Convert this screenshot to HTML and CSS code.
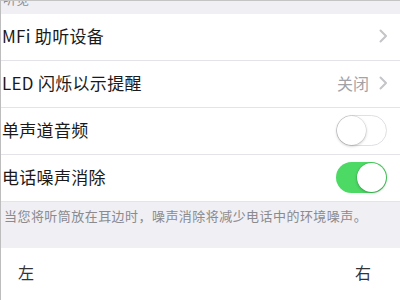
FILE: index.html
```html
<!DOCTYPE html>
<html lang="zh">
<head>
<meta charset="utf-8">
<link rel="stylesheet" href="styles.css">
</head>
<body>
<div class="page">
  <div class="header"><span class="header-text">听觉</span></div>
  <div class="group">
    <div class="row">
      <span class="label">MFi 助听设备</span>
      <span class="right">
        <svg class="chev" width="9" height="14" viewBox="0 0 9 14"><path d="M1.5 1.5 L7 7 L1.5 12.5" fill="none" stroke="#c4c4c9" stroke-width="2" stroke-linecap="round" stroke-linejoin="round"/></svg>
      </span>
    </div>
    <div class="row">
      <span class="label">LED 闪烁以示提醒</span>
      <span class="right">
        <span class="value">关闭</span>
        <svg class="chev" width="9" height="14" viewBox="0 0 9 14"><path d="M1.5 1.5 L7 7 L1.5 12.5" fill="none" stroke="#c4c4c9" stroke-width="2" stroke-linecap="round" stroke-linejoin="round"/></svg>
      </span>
    </div>
    <div class="row">
      <span class="label">单声道音频</span>
      <span class="toggle off"><span class="knob"></span></span>
    </div>
    <div class="row last">
      <span class="label">电话噪声消除</span>
      <span class="toggle on"><span class="knob"></span></span>
    </div>
  </div>
  <div class="footer">当您将听筒放在耳边时，噪声消除将减少电话中的环境噪声。</div>
  <div class="group balance">
    <span class="lr">左</span>
    <span class="lr">右</span>
  </div>
</div>
</body>
</html>
```

FILE: styles.css
```css
html, body {
  margin: 0;
  padding: 0;
  background: #ffffff;
}
body {
  width: 400px;
  height: 300px;
  overflow: hidden;
  font-family: "Noto Sans CJK SC", "Noto Sans", sans-serif;
}
.page {
  width: 399px;
  height: 299px;
  border-left: 1px solid #bdbdbd;
  border-top: 1px solid #c4c4c4;
  background: #efeff4;
  overflow: hidden;
}
.header {
  height: 13px;
  overflow: hidden;
  padding-left: 2px;
}
.header-text {
  display: block;
  font-size: 13px;
  line-height: 16px;
  margin-top: -10px;
  color: #8e8e93;
}
.group {
  background: #ffffff;
}
.row {
  height: 46px;
  display: flex;
  align-items: center;
  justify-content: space-between;
  border-bottom: 1px solid #e4e4e8;
  padding: 0 12px 0 1px;
}
.row.last {
  border-bottom: none;
}
.label {
  font-size: 17px;
  line-height: 24px;
  margin-top: -3px;
  color: #1a1a1a;
  letter-spacing: 0.3px;
}
.right {
  display: flex;
  align-items: center;
  gap: 10px;
  margin-top: -3px;
}
.value {
  font-size: 16px;
  color: #a2a2a7;
}
.chev {
  display: block;
}
.toggle {
  width: 51px;
  height: 31px;
  border-radius: 16px;
  box-sizing: border-box;
  position: relative;
  margin-right: 1px;
}
.toggle.off {
  background: #ffffff;
  border: 1.5px solid #e0e0e4;
  margin-top: -2px;
}
.toggle.on {
  background: #4cd964;
  margin-top: -2px;
}
.knob {
  position: absolute;
  top: 1px;
  width: 29px;
  height: 29px;
  border-radius: 50%;
  background: #ffffff;
  box-shadow: 0 1px 3px rgba(0,0,0,0.25), 0 0 0 0.5px rgba(0,0,0,0.12);
}
.toggle.off .knob {
  left: 0;
  top: 0;
}
.toggle.on .knob {
  right: 1px;
}
.footer {
  height: 47px;
  box-sizing: border-box;
  padding: 5px 0 0 3px;
  font-size: 13px;
  line-height: 18px;
  letter-spacing: 0.45px;
  color: #8a8a8f;
  border-top: 1px solid #e4e4e8;
}
.balance {
  height: 60px;
  display: flex;
  justify-content: space-between;
  align-items: flex-start;
  padding: 13px 29px 0 17px;
  box-sizing: border-box;
}
.lr {
  font-size: 16px;
  line-height: 22px;
  color: #333333;
}
```
